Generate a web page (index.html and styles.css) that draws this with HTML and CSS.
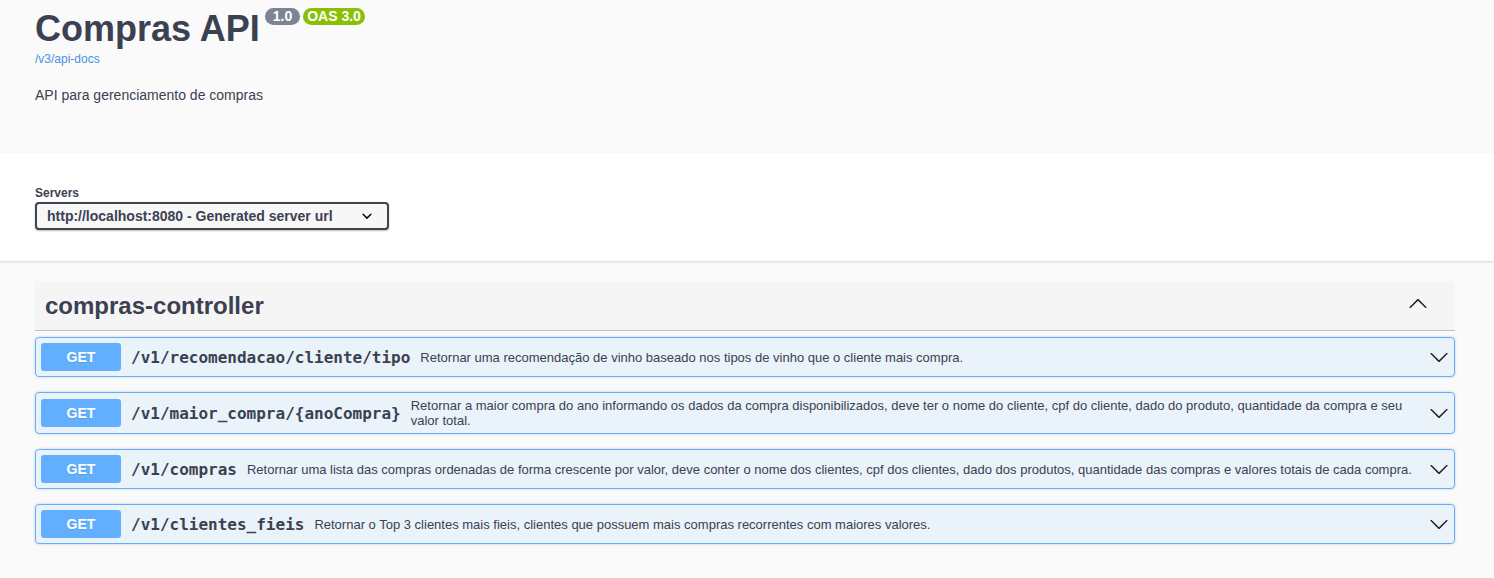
FILE: index.html
```html
<!DOCTYPE html>
<html lang="pt">
<head>
<meta charset="utf-8">
<title>Compras API</title>
<link rel="stylesheet" href="styles.css">
</head>
<body>
<section class="info">
  <div class="wrapper">
    <h2 class="title">Compras API<span class="badge badge-version">1.0</span><span class="badge badge-oas">OAS 3.0</span></h2>
    <a class="base-url" href="#">/v3/api-docs</a>
    <p class="description">API para gerenciamento de compras</p>
  </div>
</section>
<section class="schemes">
  <div class="wrapper">
    <label class="servers-label">Servers</label>
    <div class="select">http://localhost:8080 - Generated server url</div>
  </div>
</section>
<section class="operations">
  <div class="wrapper">
    <div class="tag">
      <h3 class="tag-name">compras-controller</h3>
      <svg class="tag-arrow" width="20" height="20" viewBox="0 0 20 20"><path d="M2.582 13.891c-.272.268-.709.268-.979 0s-.271-.701 0-.969l7.908-7.83c.27-.268.707-.268.979 0l7.908 7.83c.27.268.27.701 0 .969-.271.268-.709.268-.978 0L10 6.75l-7.418 7.141z" fill="#222"/></svg>
    </div>
    <div class="opblock">
      <span class="method">GET</span>
      <span class="path">/v1/recomendacao/cliente/tipo</span>
      <span class="summary">Retornar uma recomendação de vinho baseado nos tipos de vinho que o cliente mais compra.</span>
      <svg class="arrow" width="20" height="20" viewBox="0 0 20 20"><path d="M17.418 6.109c.272-.268.709-.268.979 0s.271.701 0 .969l-7.908 7.83c-.27.268-.707.268-.979 0l-7.908-7.83c-.27-.268-.27-.701 0-.969.271-.268.709-.268.979 0L10 13.25l7.418-7.141z" fill="#222"/></svg>
    </div>
    <div class="opblock">
      <span class="method">GET</span>
      <span class="path">/v1/maior_compra/{anoCompra}</span>
      <span class="summary">Retornar a maior compra do ano informando os dados da compra disponibilizados, deve ter o nome do cliente, cpf do cliente, dado do produto, quantidade da compra e seu valor total.</span>
      <svg class="arrow" width="20" height="20" viewBox="0 0 20 20"><path d="M17.418 6.109c.272-.268.709-.268.979 0s.271.701 0 .969l-7.908 7.830c-.27.268-.707.268-.979 0l-7.908-7.83c-.27-.268-.27-.701 0-.969.271-.268.709-.268.979 0L10 13.25l7.418-7.141z" fill="#222"/></svg>
    </div>
    <div class="opblock">
      <span class="method">GET</span>
      <span class="path">/v1/compras</span>
      <span class="summary">Retornar uma lista das compras ordenadas de forma crescente por valor, deve conter o nome dos clientes, cpf dos clientes, dado dos produtos, quantidade das compras e valores totais de cada compra.</span>
      <svg class="arrow" width="20" height="20" viewBox="0 0 20 20"><path d="M17.418 6.109c.272-.268.709-.268.979 0s.271.701 0 .969l-7.908 7.83c-.27.268-.707.268-.979 0l-7.908-7.83c-.27-.268-.27-.701 0-.969.271-.268.709-.268.979 0L10 13.25l7.418-7.141z" fill="#222"/></svg>
    </div>
    <div class="opblock">
      <span class="method">GET</span>
      <span class="path">/v1/clientes_fieis</span>
      <span class="summary">Retornar o Top 3 clientes mais fieis, clientes que possuem mais compras recorrentes com maiores valores.</span>
      <svg class="arrow" width="20" height="20" viewBox="0 0 20 20"><path d="M17.418 6.109c.272-.268.709-.268.979 0s.271.701 0 .969l-7.908 7.83c-.27.268-.707.268-.979 0l-7.908-7.83c-.27-.268-.27-.701 0-.969.271-.268.709-.268.979 0L10 13.25l7.418-7.141z" fill="#222"/></svg>
    </div>
  </div>
</section>
</body>
</html>
```

FILE: styles.css
```css
* { box-sizing: border-box; }
html, body {
  margin: 0;
  background: #fafafa;
  font-family: "Liberation Sans", Arial, sans-serif;
  color: #3b4151;
}
.wrapper {
  max-width: 1420px;
  margin-left: 35px;
}
.info {
  padding: 9px 0 48px;
}
.title {
  margin: 0;
  font-size: 36px;
  line-height: 40px;
  font-weight: 700;
  color: #3b4151;
}
.badge {
  display: inline-block;
  vertical-align: top;
  position: relative;
  top: -1px;
  height: 17px;
  line-height: 17px;
  font-size: 14px;
  font-weight: 700;
  color: #fff;
  border-radius: 57px;
  padding: 0 4px;
}
.badge-version {
  background: #7d8492;
  margin-left: 5px;
  padding: 0 8px;
}
.badge-oas {
  background: #89bf04;
  margin-left: 3px;
}
.base-url {
  display: block;
  margin-top: 3px;
  font-size: 12px;
  line-height: 14px;
  color: #4990e2;
  text-decoration: none;
}
.description {
  margin: 19px 0 0;
  font-size: 14px;
  line-height: 20px;
}
.schemes {
  background: #fff;
  box-shadow: 0 1px 2px 0 rgba(0, 0, 0, .15);
  padding: 33px 0 31px;
}
.servers-label {
  display: block;
  font-size: 12px;
  line-height: 14px;
  font-weight: 700;
  margin-bottom: 2px;
}
.select {
  width: 354px;
  height: 28px;
  border: 2px solid #41444e;
  border-radius: 4px;
  background-color: #f7f7f7;
  background-image: url("data:image/svg+xml;charset=utf-8,%3Csvg xmlns='http://www.w3.org/2000/svg' viewBox='0 0 20 20'%3E%3Cpath d='M13.418 7.859a.695.695 0 01.978 0 .68.68 0 010 .969l-3.908 3.83a.697.697 0 01-.979 0l-3.908-3.83a.68.68 0 010-.969.695.695 0 01.978 0L10 11l3.418-3.141z'/%3E%3C/svg%3E");
  background-repeat: no-repeat;
  background-position: right 10px center;
  background-size: 20px;
  box-shadow: 0 1px 2px 0 rgba(0, 0, 0, .25);
  font-size: 14px;
  font-weight: 700;
  line-height: 24px;
  padding: 0 40px 0 10px;
  color: #3b4151;
}
.operations {
  padding-top: 20px;
  padding-bottom: 30px;
}
.tag {
  display: flex;
  align-items: center;
  padding: 10px 27px 10px 10px;
  border-bottom: 1px solid rgba(59, 65, 81, .3);
  background: rgba(0, 0, 0, .02);
  margin-bottom: 6px;
}
.tag-name {
  flex: 1;
  margin: 0;
  font-size: 24px;
  line-height: 29px;
  font-weight: 700;
}
.tag-arrow {
  position: relative;
  top: -2px;
}
.opblock {
  display: flex;
  align-items: center;
  padding: 5px;
  margin-bottom: 15px;
  border: 1px solid #61affe;
  border-radius: 4px;
  background: rgba(97, 175, 254, .1);
  box-shadow: 0 0 3px rgba(0, 0, 0, .19);
}
.method {
  flex: none;
  width: 80px;
  height: 28px;
  line-height: 28px;
  text-align: center;
  background: #61affe;
  color: #fff;
  font-size: 14px;
  font-weight: 700;
  border-radius: 3px;
  text-shadow: 0 1px 0 rgba(0, 0, 0, .1);
}
.path {
  flex: none;
  padding: 0 10px;
  font-family: "DejaVu Sans Mono", monospace;
  font-size: 16px;
  font-weight: 700;
  color: #3b4151;
}
.summary {
  flex: 1 1 auto;
  font-size: 13px;
  line-height: 15px;
  color: #3b4151;
}
.arrow {
  flex: none;
}
```
